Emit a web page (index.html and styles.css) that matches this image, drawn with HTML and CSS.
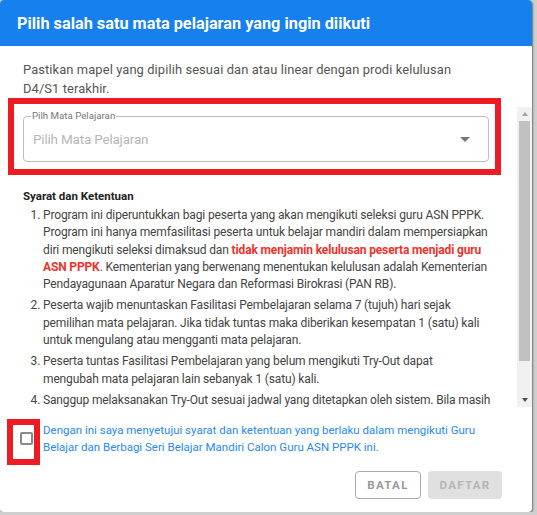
FILE: index.html
```html
<!DOCTYPE html>
<html lang="en">
<head>
    <meta charset="UTF-8">
    <meta name="viewport" content="width=device-width, initial-scale=1">
    <title>Pilih Mata Pelajaran</title>
    <link rel="stylesheet" href="styles.css">
</head>

<body>
    <div class="dialog">
        <div class="dialog-title">Pilih salah satu mata pelajaran yang ingin diikuti</div>
        <p class="intro">Pastikan mapel yang dipilih sesuai dan atau linear dengan prodi kelulusan D4/S1 terakhir.</p>

        <div class="dialog-body">
            <div class="body-content">
                <div class="field">
                    <span class="field-label">Pilh Mata Pelajaran</span>
                    <span class="field-value">Pilih Mata Pelajaran</span>
                    <span class="field-arrow"></span>
                </div>

                <h4 class="terms-title">Syarat dan Ketentuan</h4>
                <ol class="terms">
                    <li>Program ini diperuntukkan bagi peserta yang akan mengikuti seleksi guru ASN PPPK. Program ini hanya memfasilitasi peserta untuk belajar mandiri dalam mempersiapkan diri mengikuti seleksi dimaksud dan <b class="warn">tidak menjamin kelulusan peserta menjadi guru ASN PPPK</b>. Kementerian yang berwenang menentukan kelulusan adalah Kementerian Pendayagunaan Aparatur Negara dan Reformasi Birokrasi (PAN RB).</li>
                    <li>Peserta wajib menuntaskan Fasilitasi Pembelajaran selama 7 (tujuh) hari sejak pemilihan mata pelajaran. Jika tidak tuntas maka diberikan kesempatan 1 (satu) kali untuk mengulang atau mengganti mata pelajaran.</li>
                    <li>Peserta tuntas Fasilitasi Pembelajaran yang belum mengikuti Try-Out dapat mengubah mata pelajaran lain sebanyak 1 (satu) kali.</li>
                    <li>Sanggup melaksanakan Try-Out sesuai jadwal yang ditetapkan oleh sistem. Bila masih belum tuntas, peserta dapat mengulang sesuai ketentuan yang berlaku.</li>
                </ol>
            </div>
            <div class="scrollbar">
                <span class="sb-btn sb-up"></span>
                <span class="sb-thumb"></span>
                <span class="sb-btn sb-down"></span>
            </div>
        </div>

        <label class="agree">
            <span class="checkbox"></span>
            <span class="agree-text">Dengan ini saya menyetujui syarat dan ketentuan yang berlaku dalam mengikuti Guru Belajar dan Berbagi Seri Belajar Mandiri Calon Guru ASN PPPK ini.</span>
        </label>

        <div class="actions">
            <button class="btn btn-outline">BATAL</button>
            <button class="btn btn-disabled">DAFTAR</button>
        </div>

        <!-- highlight boxes -->
        <div class="mark mark-field"></div>
        <div class="mark mark-check"></div>
    </div>
</body>
</html>
```

FILE: styles.css
```css
body {
    margin: 0;
    padding: 0;
    background: #cfcfcf;
    font-family: Roboto, "Liberation Sans", sans-serif;
}

.dialog {
    position: relative;
    width: 532px;
    height: 512px;
    background: #fff;
    border-radius: 4px;
    overflow: hidden;
    box-shadow: 1px 1px 2px rgba(0, 0, 0, 0.45);
}

.dialog-title {
    height: 46px;
    display: flex;
    align-items: center;
    padding: 0 17px;
    background: #1580ee;
    color: #fff;
    font-size: 16.3px;
    font-weight: 700;
}

.intro {
    margin: 14px 0 0;
    padding: 0 50px 0 23px;
    font-size: 12.9px;
    line-height: 19px;
    letter-spacing: 0.1px;
    color: #555;
}

.dialog-body {
    display: flex;
    margin-top: 9px;
    height: 300px;
}

.body-content {
    flex: 1;
    overflow: hidden;
    padding: 9px 26px 0 23px;
}

/* fake scrollbar, page renders without native ones */
.scrollbar {
    flex: none;
    width: 15px;
    display: flex;
    flex-direction: column;
    background: #f1f1f1;
}

.sb-btn {
    height: 14px;
    display: flex;
    align-items: center;
    justify-content: center;
}

.sb-btn::after {
    content: "";
    border-left: 3.5px solid transparent;
    border-right: 3.5px solid transparent;
}

.sb-up::after {
    border-bottom: 4px solid #a3a3a3;
}

.sb-down {
    margin-top: auto;
}

.sb-down::after {
    border-top: 4px solid #505050;
}

.sb-thumb {
    height: 240px;
    margin: 0 2px;
    background: #c1c1c1;
}

.field {
    position: relative;
    height: 46px;
    margin-right: 2px;
    border: 1px solid #bdbdbd;
    border-radius: 4px;
    box-sizing: border-box;
    display: flex;
    align-items: center;
    padding: 0 9px;
}

.field-label {
    position: absolute;
    top: -7px;
    left: 7px;
    padding: 0 1px;
    background: #fff;
    font-size: 9.7px;
    color: #777;
}

.field-value {
    flex: 1;
    font-size: 13.5px;
    letter-spacing: -0.2px;
    color: #b8b8b8;
}

.field-arrow {
    width: 0;
    height: 0;
    margin-right: 9px;
    border-left: 5px solid transparent;
    border-right: 5px solid transparent;
    border-top: 5px solid #757575;
}

.terms-title {
    margin: 27px 0 4px;
    font-size: 11.5px;
    color: #222;
}

.terms {
    margin: 0;
    padding-left: 20px;
    font-size: 12px;
    line-height: 17.3px;
    letter-spacing: -0.14px;
    color: #444;
}

.terms li {
    margin-bottom: 4px;
}

.warn {
    color: #f0322b;
}

.agree {
    display: flex;
    align-items: flex-start;
    padding: 15px 45px 0 20px;
}

.checkbox {
    flex: none;
    width: 9px;
    height: 9px;
    margin-top: 10px;
    border: 2px solid #8a8a8a;
    border-radius: 2px;
}

.agree-text {
    margin-left: 10px;
    font-size: 11.5px;
    line-height: 17px;
    letter-spacing: 0;
    color: #2a8af0;
}

.actions {
    display: flex;
    justify-content: flex-end;
    gap: 7px;
    padding: 15px 30px 0;
}

.btn {
    height: 28px;
    border-radius: 4px;
    font-family: Roboto, "Liberation Sans", sans-serif;
    font-size: 11.5px;
    font-weight: 700;
    letter-spacing: 1.3px;
}

.btn-outline {
    width: 66px;
    background: #fff;
    border: 1px solid #aaa;
    color: #999;
}

.btn-disabled {
    width: 74px;
    background: #e0e0e0;
    border: none;
    color: #b5b5b5;
}

.mark {
    position: absolute;
    border: 6px solid #ed1b24;
    box-sizing: border-box;
}

.mark-field {
    left: 8px;
    top: 98px;
    width: 493px;
    height: 77px;
}

.mark-check {
    left: 7px;
    top: 419px;
    width: 33px;
    height: 46px;
}
```
